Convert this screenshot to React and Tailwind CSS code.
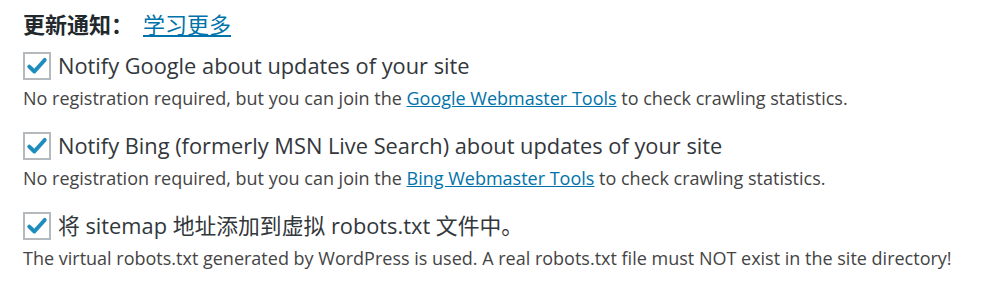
import React from "react";

const font = { fontFamily: '"Open Sans", "Noto Sans CJK SC", sans-serif' };

const Check = () => (
  <span className="flex h-[28px] w-[28px] shrink-0 items-center justify-center border-2 border-[#b4b9be] bg-white">
    <svg viewBox="0 0 20 20" className="h-[22px] w-[22px]">
      <path d="M3 10.5 L7.6 15 L17 4.5" fill="none" stroke="#1e8cbe" strokeWidth="3.6" strokeLinecap="round" strokeLinejoin="round" />
    </svg>
  </span>
);

const Option = ({ label, children }) => (
  <div>
    <label className="flex items-center gap-[7px] text-[21.8px] leading-[28px] text-[#32373c]">
      <Check />
      <span>{label}</span>
    </label>
    <p className="mt-[6px] text-[18px] leading-[24px] text-[#444]">{children}</p>
  </div>
);

export default function App() {
  return (
    <div className="h-[290px] w-[992px] bg-white pl-[23px] pt-[9px]" style={font}>
      <h2 className="flex items-center text-[22px] leading-[30px] text-[#23282d]">
        <span className="font-bold">更新通知：</span>
        <a href="#" className="ml-[10px] text-[#0073aa] underline underline-offset-2">
          学习更多
        </a>
      </h2>
      <div className="mt-[13px] flex flex-col gap-[22px]">
        <Option label="Notify Google about updates of your site">
          No registration required, but you can join the{" "}
          <a href="#" className="text-[#0073aa] underline">Google Webmaster Tools</a> to check crawling statistics.
        </Option>
        <Option label="Notify Bing (formerly MSN Live Search) about updates of your site">
          No registration required, but you can join the{" "}
          <a href="#" className="text-[#0073aa] underline">Bing Webmaster Tools</a> to check crawling statistics.
        </Option>
        <Option label="将 sitemap 地址添加到虚拟 robots.txt 文件中。">
          The virtual robots.txt generated by WordPress is used. A real robots.txt file must NOT exist in the site directory!
        </Option>
      </div>
    </div>
  );
}
